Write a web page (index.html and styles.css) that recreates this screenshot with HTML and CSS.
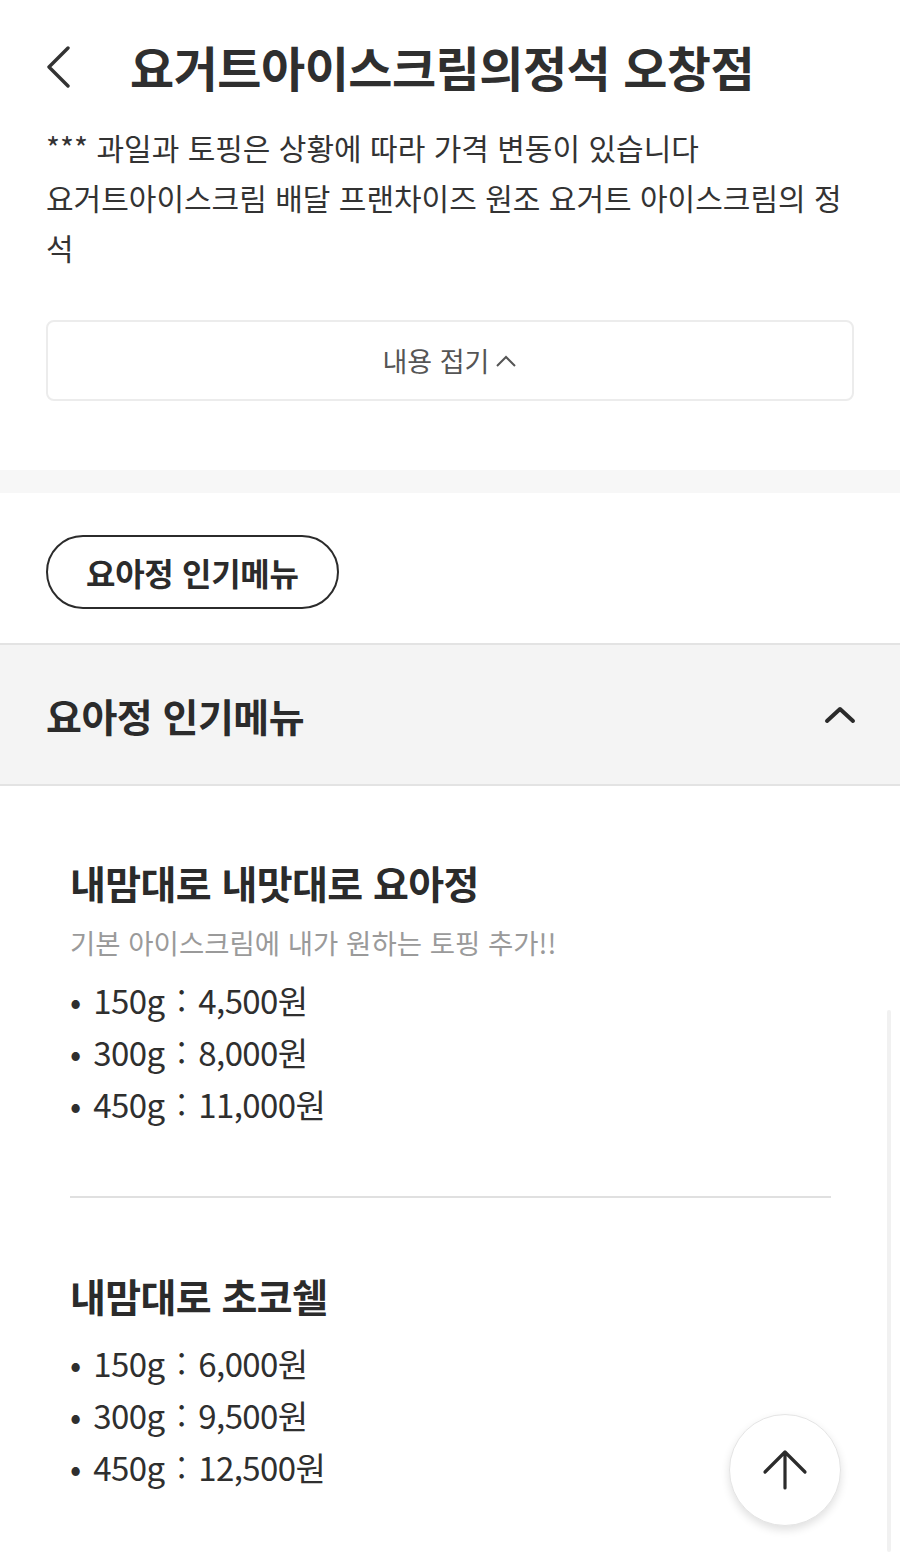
FILE: index.html
```html
<!DOCTYPE html>
<html lang="ko">
<head>
    <meta charset="UTF-8">
    <meta name="viewport" content="width=device-width, initial-scale=1.0">
    <title>요거트아이스크림의정석 오창점</title>
    <link rel="stylesheet" href="styles.css">
</head>
<body>

    <!-- Store header -->
    <header class="store-header">
        <button class="back-button" aria-label="뒤로">
            <svg width="28" height="44" viewBox="0 0 28 44"><polyline points="22,4 3,23 22,42" fill="none" stroke="#333" stroke-width="3.4" stroke-linecap="round" stroke-linejoin="round"/></svg>
        </button>
        <h1 class="store-title">요거트아이스크림의정석 오창점</h1>
    </header>

    <p class="store-notice">*** 과일과 토핑은 상황에 따라 가격 변동이 있습니다<br>요거트아이스크림 배달 프랜차이즈 원조 요거트 아이스크림의 정석</p>

    <div class="fold-wrap">
        <button class="fold-button">내용 접기
            <svg width="22" height="14" viewBox="0 0 22 14"><polyline points="2,12 11,3 20,12" fill="none" stroke="#555" stroke-width="2"/></svg>
        </button>
    </div>

    <div class="band"></div>

    <!-- Category tabs -->
    <nav class="tabs">
        <button class="tab">요아정 인기메뉴</button>
    </nav>

    <section class="menu-group">
        <div class="group-header">
            <h2>요아정 인기메뉴</h2>
            <svg width="32" height="20" viewBox="0 0 32 20"><polyline points="3,16 16,4 29,16" fill="none" stroke="#2b2b2b" stroke-width="4" stroke-linecap="round" stroke-linejoin="round"/></svg>
        </div>

        <div class="menu-list">
            <div class="menu-item">
                <h3 class="menu-name">내맘대로 내맛대로 요아정</h3>
                <p class="menu-desc">기본 아이스크림에 내가 원하는 토핑 추가!!</p>
                <ul class="price-list">
                    <li>• 150g : 4,500원</li>
                    <li>• 300g : 8,000원</li>
                    <li>• 450g : 11,000원</li>
                </ul>
            </div>
            <div class="menu-item">
                <h3 class="menu-name">내맘대로 초코쉘</h3>
                <ul class="price-list">
                    <li>• 150g : 6,000원</li>
                    <li>• 300g : 9,500원</li>
                    <li>• 450g : 12,500원</li>
                </ul>
            </div>
        </div>
    </section>

    <div class="scroll-track"></div>

    <button class="top-button" aria-label="맨 위로">
        <svg width="46" height="42" viewBox="0 0 46 42"><path d="M3 23 L23 3 L43 23 M23 3 L23 39" fill="none" stroke="#2b2b2b" stroke-width="3.2" stroke-linecap="round" stroke-linejoin="round"/></svg>
    </button>

</body>
</html>
```

FILE: styles.css
```css
/* Basic reset */
* {
    margin: 0;
    padding: 0;
    box-sizing: border-box;
}

body {
    font-family: "Noto Sans CJK KR", "Noto Sans", sans-serif;
    background-color: #fff;
    color: #333;
    width: 900px;
    height: 1552px;
    overflow: hidden;
}

button {
    font-family: inherit;
    background: none;
    border: none;
    color: inherit;
    cursor: pointer;
}

/* Header */
.store-header {
    display: flex;
    align-items: center;
    padding: 20px 46px 0 46px;
    height: 112px;
}

.back-button {
    width: 28px;
    height: 44px;
    display: flex;
    align-items: center;
}

.store-title {
    margin-left: 56px;
    font-size: 48px;
    font-weight: 700;
    letter-spacing: -0.5px;
    color: #2f2f2f;
    line-height: 52px;
}

.store-notice {
    padding: 10px 46px 0 46px;
    font-size: 30px;
    line-height: 50px;
    color: #333;
}

/* Fold button */
.fold-wrap {
    padding: 48px 46px 69px 46px;
}

.fold-button {
    width: 100%;
    height: 81px;
    border: 2px solid #ececec;
    border-radius: 8px;
    font-size: 27px;
    color: #555;
    display: flex;
    align-items: center;
    justify-content: center;
    gap: 6px;
}

.band {
    height: 23px;
    background-color: #f7f7f7;
}

/* Tabs */
.tabs {
    padding: 42px 46px 34px 46px;
}

.tab {
    height: 74px;
    padding: 0 38px;
    border: 2px solid #2b2b2b;
    border-radius: 37px;
    font-size: 32px;
    font-weight: 700;
    color: #2b2b2b;
    letter-spacing: -0.3px;
}

/* Menu group */
.group-header {
    height: 143px;
    background-color: #f4f4f4;
    border-top: 2px solid #e3e3e3;
    border-bottom: 2px solid #e3e3e3;
    display: flex;
    align-items: center;
    justify-content: space-between;
    padding: 0 44px 0 46px;
}

.group-header h2 {
    font-size: 39px;
    font-weight: 700;
    color: #2b2b2b;
    letter-spacing: -0.5px;
}

.menu-list {
    padding: 0 69px 0 70px;
}

.menu-item {
    padding: 72px 0 66px 0;
    border-bottom: 2px solid #e0e0e0;
}

.menu-item + .menu-item {
    padding-top: 73px;
}

.menu-name {
    font-size: 39px;
    font-weight: 700;
    line-height: 48px;
    color: #2b2b2b;
    letter-spacing: -0.6px;
    margin-bottom: 18px;
}

.menu-desc {
    font-size: 27.5px;
    line-height: 40px;
    color: #9a9a9a;
    margin-top: -2px;
    margin-bottom: 12px;
}

.price-list {
    list-style: none;
}

.price-list li {
    font-size: 33px;
    line-height: 52px;
    color: #2f2f2f;
    letter-spacing: -0.6px;
    word-spacing: 4px;
}

/* Scroll indicator on the right edge */
.scroll-track {
    position: fixed;
    left: 887px;
    top: 1010px;
    width: 4px;
    height: 542px;
    background-color: #f1f1f1;
    border-radius: 2px;
}

/* Back to top button */
.top-button {
    position: fixed;
    left: 729px;
    top: 1414px;
    width: 112px;
    height: 112px;
    border-radius: 50%;
    background-color: #fff;
    border: 1px solid #e4e4e4;
    box-shadow: 0 4px 8px rgba(0, 0, 0, 0.12);
    display: flex;
    align-items: center;
    justify-content: center;
}
```
